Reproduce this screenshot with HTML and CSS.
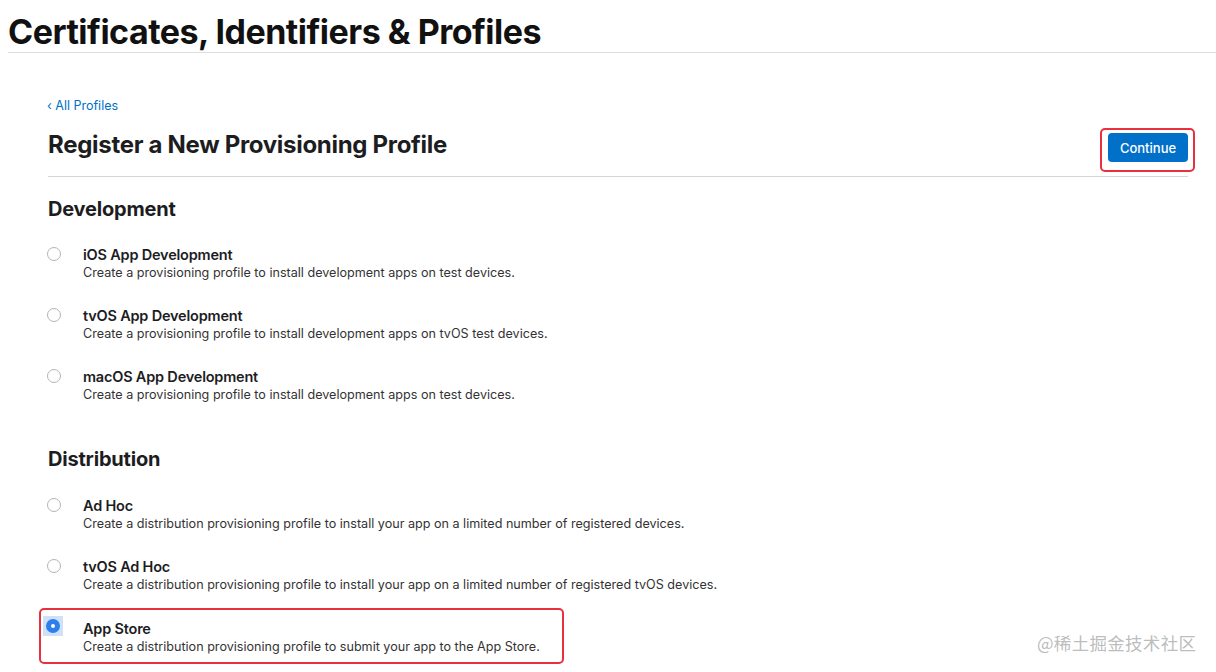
FILE: index.html
```html
<!DOCTYPE html>
<html lang="en">
<head>
<meta charset="utf-8">
<title>Certificates, Identifiers &amp; Profiles</title>
<link rel="stylesheet" href="styles.css">
</head>
<body>
<header class="top">
  <h1 class="top-title">Certificates, Identifiers &amp; Profiles</h1>
</header>
<main class="page">
  <a class="back" href="#">‹ All Profiles</a>
  <div class="head-row">
    <h2 class="page-title">Register a New Provisioning Profile</h2>
    <div class="hl hl-btn"><button class="btn">Continue</button></div>
  </div>

  <section class="group">
    <h3 class="group-title">Development</h3>
    <div class="opt">
      <span class="radio"></span>
      <div class="opt-text">
        <div class="opt-name">iOS App Development</div>
        <div class="opt-desc">Create a provisioning profile to install development apps on test devices.</div>
      </div>
    </div>
    <div class="opt">
      <span class="radio"></span>
      <div class="opt-text">
        <div class="opt-name">tvOS App Development</div>
        <div class="opt-desc">Create a provisioning profile to install development apps on tvOS test devices.</div>
      </div>
    </div>
    <div class="opt">
      <span class="radio"></span>
      <div class="opt-text">
        <div class="opt-name">macOS App Development</div>
        <div class="opt-desc">Create a provisioning profile to install development apps on test devices.</div>
      </div>
    </div>
  </section>

  <section class="group group-dist">
    <h3 class="group-title">Distribution</h3>
    <div class="opt">
      <span class="radio"></span>
      <div class="opt-text">
        <div class="opt-name">Ad Hoc</div>
        <div class="opt-desc">Create a distribution provisioning profile to install your app on a limited number of registered devices.</div>
      </div>
    </div>
    <div class="opt">
      <span class="radio"></span>
      <div class="opt-text">
        <div class="opt-name">tvOS Ad Hoc</div>
        <div class="opt-desc">Create a distribution provisioning profile to install your app on a limited number of registered tvOS devices.</div>
      </div>
    </div>
    <div class="hl hl-opt">
      <div class="opt opt-sel">
        <span class="radio-wrap"><span class="radio radio-on"></span></span>
        <div class="opt-text">
          <div class="opt-name">App Store</div>
          <div class="opt-desc">Create a distribution provisioning profile to submit your app to the App Store.</div>
        </div>
      </div>
    </div>
  </section>
</main>
<div class="watermark">@稀土掘金技术社区</div>
</body>
</html>
```
FILE: styles.css
```css
html, body {
  margin: 0;
  padding: 0;
  background: #fff;
}
body {
  font-family: Inter, "Noto Sans", sans-serif;
  color: #1d1d1f;
  width: 1216px;
  height: 672px;
  overflow: hidden;
  position: relative;
}
.top {
  margin-left: 8px;
  border-bottom: 1px solid #dedede;
  height: 52px;
}
.top-title {
  margin: 0;
  padding-top: 12px;
  font-size: 34px;
  line-height: 40px;
  font-weight: 700;
  letter-spacing: -0.5px;
  color: #111;
}
.page {
  margin-left: 48px;
  width: 1140px;
}
.back {
  display: block;
  margin-top: 45px;
  font-size: 12.5px;
  line-height: 16px;
  color: #0070c9;
  text-decoration: none;
  margin-left: -1px;
  width: max-content;
}
.head-row {
  display: flex;
  align-items: center;
  justify-content: space-between;
  border-bottom: 1px solid #d6d6d6;
  height: 63px;
  margin-top: -1px;
}
.page-title {
  margin: 0;
  font-size: 24px;
  font-weight: 700;
  letter-spacing: -0.3px;
  color: #1d1d1f;
  margin-top: -1px;
}
.hl {
  border: 2px solid #e8303e;
  border-radius: 5px;
}
.hl-btn {
  align-self: flex-end;
  padding: 3px 5px 8px 6px;
  margin-right: -7px;
  margin-bottom: 4px;
}
.btn {
  display: block;
  background: #0070c9;
  color: #fff;
  border: 0;
  border-radius: 4px;
  font-family: inherit;
  font-size: 13px;
  font-weight: 500;
  width: 80px;
  height: 29px;
  padding: 0;
}
.group {
  padding-top: 20px;
}
.group-dist {
  padding-top: 18px;
}
.group-title {
  margin: 0 0 25px;
  font-size: 20px;
  line-height: 24px;
  font-weight: 700;
  letter-spacing: -0.2px;
}
.group-dist .group-title {
  margin-bottom: 26px;
}
.opt {
  display: flex;
  align-items: flex-start;
  height: 61px;
}
.radio {
  display: block;
  flex: none;
  width: 12px;
  height: 12px;
  border: 1px solid #b4b4b4;
  border-radius: 50%;
  margin-top: 1px;
  margin-left: -1px;
  background: #fff;
}
.opt-text {
  margin-left: 22px;
}
.opt-name {
  font-size: 14.5px;
  line-height: 18px;
  font-weight: 600;
  color: #1d1d1f;
  letter-spacing: -0.2px;
}
.opt-desc {
  font-size: 12.6px;
  line-height: 18px;
  color: #333;
}
.hl-opt {
  box-sizing: border-box;
  margin-top: -11px;
  margin-left: -9px;
  width: 525px;
  height: 56px;
  padding-top: 9px;
}
.opt-sel {
  height: auto;
}
.radio-wrap {
  display: flex;
  align-items: center;
  justify-content: center;
  width: 20px;
  height: 20px;
  background: #cfe1f6;
  margin-top: -3px;
  margin-left: 2px;
  flex: none;
}
.radio-on {
  margin: 0;
  width: 4px;
  height: 4px;
  border: 5px solid #2f7ef0;
  background: #fff;
}
.opt-sel .opt-text {
  margin-left: 20px;
  margin-top: 1px;
}
.watermark {
  position: absolute;
  left: 1037px;
  top: 631px;
  font-family: "Noto Sans CJK SC", sans-serif;
  font-size: 17.5px;
  line-height: 24px;
  color: rgba(150, 150, 150, 0.65);
  letter-spacing: 0.3px;
}
```
